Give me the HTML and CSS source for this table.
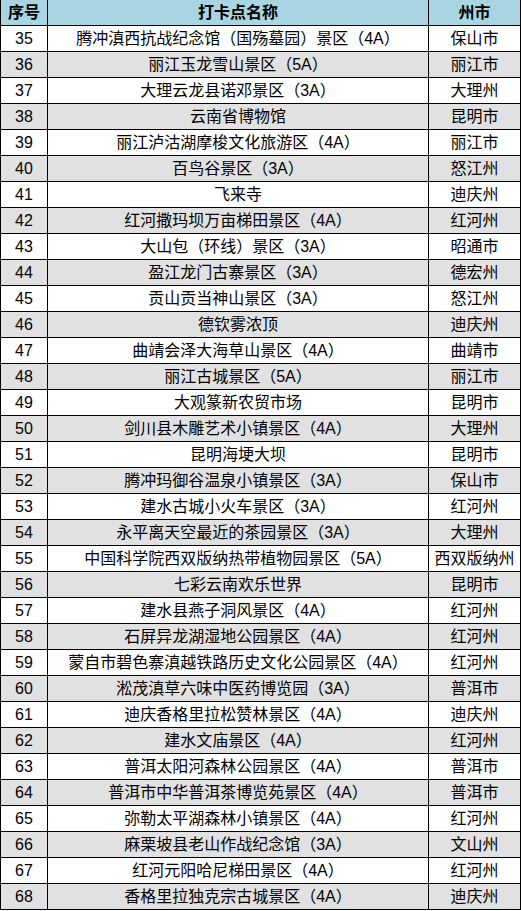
FILE: index.html
```html
<!DOCTYPE html>
<html lang="zh">
<head>
<meta charset="utf-8">
<title>打卡点名称</title>
<link rel="stylesheet" href="styles.css">
</head>
<body>
<table class="sheet">
<colgroup><col class="c-no"><col class="c-name"><col class="c-city"></colgroup>
<thead>
<tr><th>序号</th><th>打卡点名称</th><th>州市</th></tr>
</thead>
<tbody>
<tr><td>35</td><td>腾冲滇西抗战纪念馆（国殇墓园）景区（4A）</td><td>保山市</td></tr>
<tr><td>36</td><td>丽江玉龙雪山景区（5A）</td><td>丽江市</td></tr>
<tr><td>37</td><td>大理云龙县诺邓景区（3A）</td><td>大理州</td></tr>
<tr><td>38</td><td>云南省博物馆</td><td>昆明市</td></tr>
<tr><td>39</td><td>丽江泸沽湖摩梭文化旅游区（4A）</td><td>丽江市</td></tr>
<tr><td>40</td><td>百鸟谷景区（3A）</td><td>怒江州</td></tr>
<tr><td>41</td><td>飞来寺</td><td>迪庆州</td></tr>
<tr><td>42</td><td>红河撒玛坝万亩梯田景区（4A）</td><td>红河州</td></tr>
<tr><td>43</td><td>大山包（环线）景区（3A）</td><td>昭通市</td></tr>
<tr><td>44</td><td>盈江龙门古寨景区（3A）</td><td>德宏州</td></tr>
<tr><td>45</td><td>贡山贡当神山景区（3A）</td><td>怒江州</td></tr>
<tr><td>46</td><td>德钦雾浓顶</td><td>迪庆州</td></tr>
<tr><td>47</td><td>曲靖会泽大海草山景区（4A）</td><td>曲靖市</td></tr>
<tr><td>48</td><td>丽江古城景区（5A）</td><td>丽江市</td></tr>
<tr><td>49</td><td>大观篆新农贸市场</td><td>昆明市</td></tr>
<tr><td>50</td><td>剑川县木雕艺术小镇景区（4A）</td><td>大理州</td></tr>
<tr><td>51</td><td>昆明海埂大坝</td><td>昆明市</td></tr>
<tr><td>52</td><td>腾冲玛御谷温泉小镇景区（3A）</td><td>保山市</td></tr>
<tr><td>53</td><td>建水古城小火车景区（3A）</td><td>红河州</td></tr>
<tr><td>54</td><td>永平离天空最近的茶园景区（3A）</td><td>大理州</td></tr>
<tr><td>55</td><td>中国科学院西双版纳热带植物园景区（5A）</td><td>西双版纳州</td></tr>
<tr><td>56</td><td>七彩云南欢乐世界</td><td>昆明市</td></tr>
<tr><td>57</td><td>建水县燕子洞风景区（4A）</td><td>红河州</td></tr>
<tr><td>58</td><td>石屏异龙湖湿地公园景区（4A）</td><td>红河州</td></tr>
<tr><td>59</td><td>蒙自市碧色寨滇越铁路历史文化公园景区（4A）</td><td>红河州</td></tr>
<tr><td>60</td><td>淞茂滇草六味中医药博览园（3A）</td><td>普洱市</td></tr>
<tr><td>61</td><td>迪庆香格里拉松赞林景区（4A）</td><td>迪庆州</td></tr>
<tr><td>62</td><td>建水文庙景区（4A）</td><td>红河州</td></tr>
<tr><td>63</td><td>普洱太阳河森林公园景区（4A）</td><td>普洱市</td></tr>
<tr><td>64</td><td>普洱市中华普洱茶博览苑景区（4A）</td><td>普洱市</td></tr>
<tr><td>65</td><td>弥勒太平湖森林小镇景区（4A）</td><td>红河州</td></tr>
<tr><td>66</td><td>麻栗坡县老山作战纪念馆（3A）</td><td>文山州</td></tr>
<tr><td>67</td><td>红河元阳哈尼梯田景区（4A）</td><td>红河州</td></tr>
<tr><td>68</td><td>香格里拉独克宗古城景区（4A）</td><td>迪庆州</td></tr>
</tbody>
</table>
</body>
</html>
```
FILE: styles.css
```css
html, body {
  margin: 0;
  padding: 0;
  background: #ffffff;
}

.sheet {
  width: 521px;
  border-collapse: separate;
  border-spacing: 0;
  table-layout: fixed;
  border-left: 1px solid #000;
  font-family: "Liberation Sans", "Noto Sans CJK SC", sans-serif;
  font-size: 16px;
  color: #000;
}

.c-no { width: 47px; }
.c-name { width: 381px; }
.c-city { width: 92px; }

.sheet th,
.sheet td {
  box-sizing: border-box;
  height: 26px;
  padding: 0;
  border-right: 1px solid #000;
  border-bottom: 1px solid #000;
  text-align: center;
  vertical-align: middle;
  line-height: 25px;
  white-space: nowrap;
  overflow: hidden;
}

.sheet th {
  background: #a9d5e2;
  font-weight: bold;
}

.sheet tbody tr:nth-child(even) td {
  background: #e1e1e1;
}
```
